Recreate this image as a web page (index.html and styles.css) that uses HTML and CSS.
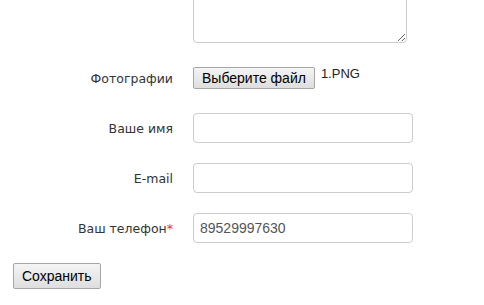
FILE: index.html
```html
<!DOCTYPE html>
<html lang="ru">
<head>
<meta charset="utf-8">
<link rel="stylesheet" href="styles.css">
</head>
<body>
<form class="form">
  <div class="row">
    <div class="label"></div>
    <div class="control"><textarea class="area"></textarea></div>
  </div>
  <div class="row">
    <div class="label">Фотографии</div>
    <div class="control file">
      <button type="button" class="btn">Выберите файл</button>
      <span class="filename">1.PNG</span>
    </div>
  </div>
  <div class="row">
    <div class="label">Ваше имя</div>
    <div class="control"><input class="input" type="text"></div>
  </div>
  <div class="row">
    <div class="label">E-mail</div>
    <div class="control"><input class="input" type="text"></div>
  </div>
  <div class="row">
    <div class="label">Ваш телефон<span class="req">*</span></div>
    <div class="control"><input class="input" type="text" value="89529997630"></div>
  </div>
  <div class="actions">
    <button type="button" class="btn">Сохранить</button>
  </div>
</form>
</body>
</html>
```
FILE: styles.css
```css
html, body {
  margin: 0;
  padding: 0;
  background: #fff;
  overflow: hidden;
}
.form {
  margin-top: -27px;
  padding-left: 13px;
  display: flex;
  flex-direction: column;
  gap: 20px;
}
.row {
  display: grid;
  grid-template-columns: 160px 220px;
  column-gap: 20px;
  align-items: center;
  min-height: 30px;
}
.label {
  text-align: right;
  font-family: "DejaVu Sans", Verdana, sans-serif;
  font-size: 12.5px;
  color: #333;
}
.req {
  color: #e32;
}
.control {
  display: flex;
  align-items: center;
}
.area {
  display: block;
  box-sizing: border-box;
  width: 214px;
  height: 70px;
  margin: 0;
  border: 1px solid #ccc;
  border-radius: 4px;
  resize: both;
}
.input {
  box-sizing: border-box;
  width: 220px;
  height: 30px;
  margin: 0;
  padding: 0 6px;
  border: 1px solid #ccc;
  border-radius: 4px;
  font-family: "Liberation Sans", Arial, sans-serif;
  font-size: 14px;
  color: #555;
  outline: none;
}
.btn {
  box-sizing: border-box;
  height: 22px;
  margin: 0;
  padding: 0 8px;
  border: 1px solid #a6a6a6;
  border-radius: 2px;
  background: linear-gradient(#f4f4f4, #dedede);
  font-family: "Liberation Sans", Arial, sans-serif;
  font-size: 14px;
  color: #000;
  line-height: 20px;
}
.file {
  align-items: flex-start;
  height: 22px;
}
.filename {
  margin-left: 6px;
  margin-top: -1px;
  font-family: "Liberation Sans", Arial, sans-serif;
  font-size: 13px;
  color: #222;
  line-height: 16px;
}
.actions {
  display: flex;
}
.actions .btn {
  height: 26px;
  padding: 0 8px;
}
```
